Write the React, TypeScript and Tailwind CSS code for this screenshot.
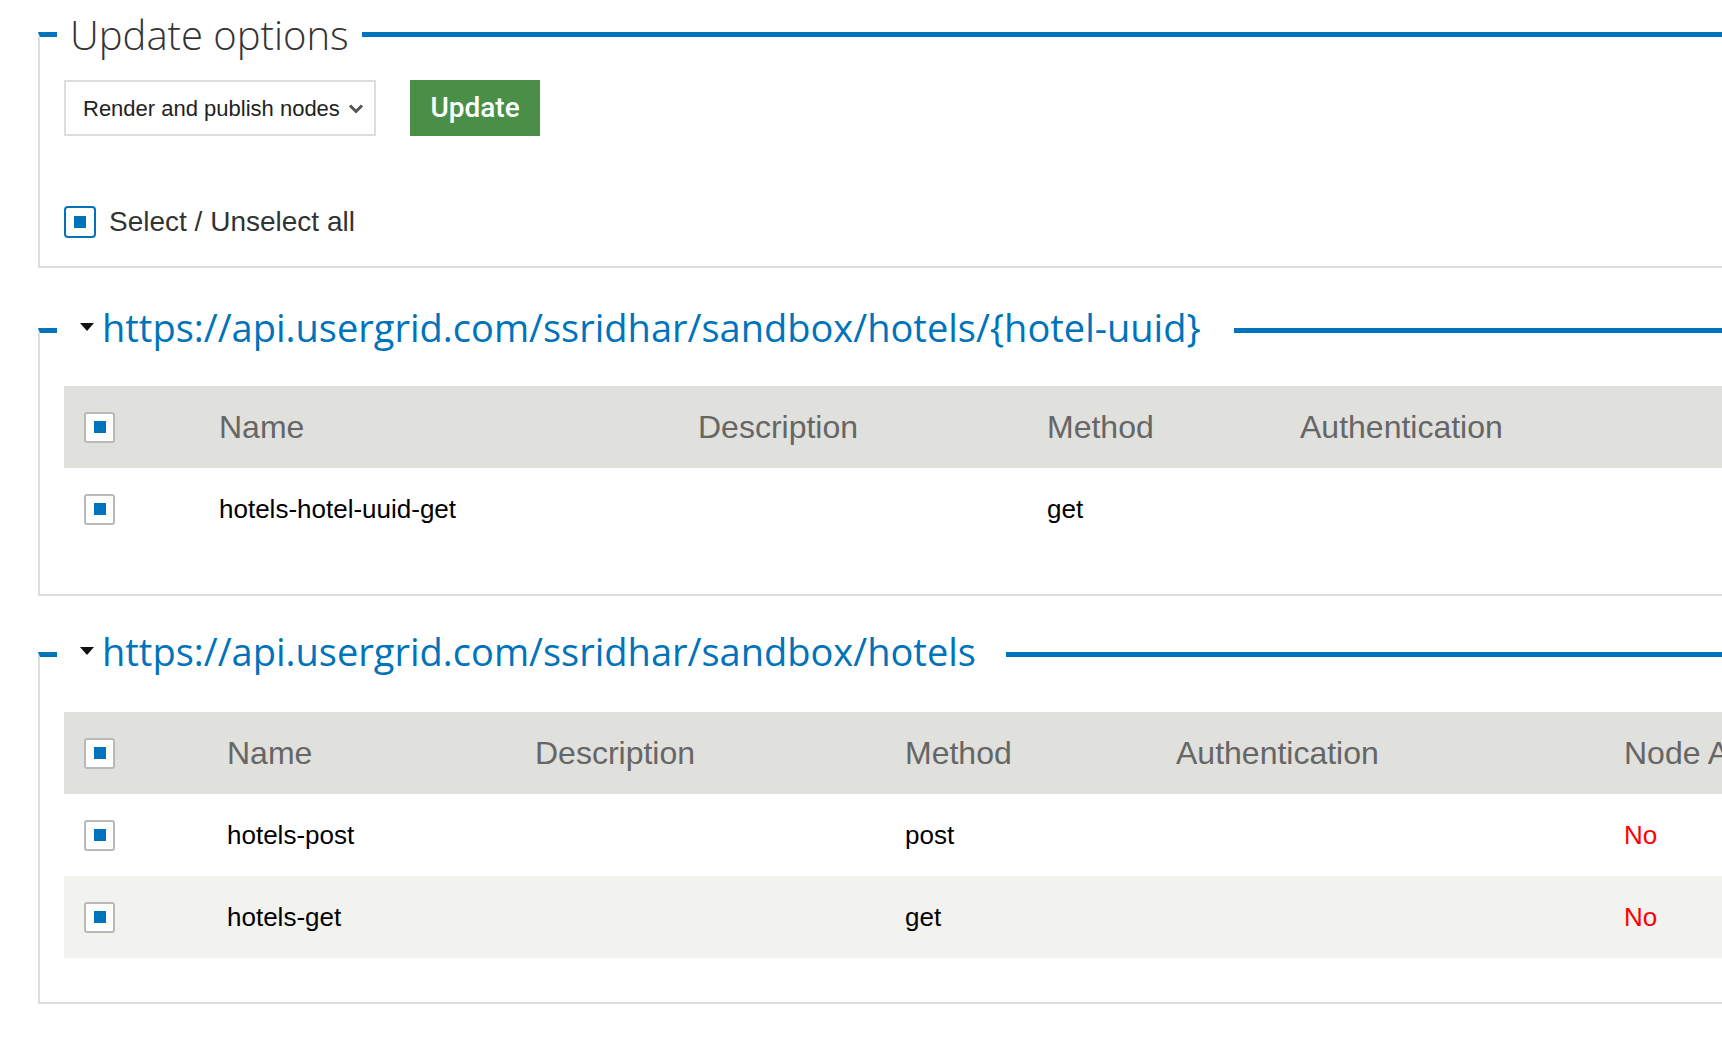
import React from 'react'

const Check = ({ blue = false }: { blue?: boolean }) => (
  <div
    className={
      blue
        ? 'flex h-[32px] w-[32px] shrink-0 items-center justify-center rounded-[4px] border-2 border-[#0073bb] bg-white'
        : 'flex h-[31px] w-[31px] shrink-0 items-center justify-center rounded-[3px] border-2 border-[#b9b9b9] bg-white'
    }
  >
    <div className="h-[12px] w-[12px] bg-[#0073bb]" />
  </div>
)

const Caret = () => (
  <svg width="14" height="8" viewBox="0 0 14 8" className="shrink-0">
    <path d="M0 0 L14 0 L7 8 Z" fill="#111" />
  </svg>
)

interface Row {
  name: string
  method: string
  node?: string
}

const resources: { url: string; cols: string; headers: string[]; rows: Row[]; linePad: string; tableTop: string }[] = [
  {
    url: 'https://api.usergrid.com/ssridhar/sandbox/hotels/{hotel-uuid}',
    cols: 'grid-cols-[155px_479px_349px_253px_1fr]',
    headers: ['Name', 'Description', 'Method', 'Authentication'],
    rows: [{ name: 'hotels-hotel-uuid-get', method: 'get' }],
    linePad: 'pr-[33px]',
    tableTop: 'mt-[39px]',
  },
  {
    url: 'https://api.usergrid.com/ssridhar/sandbox/hotels',
    cols: 'grid-cols-[163px_308px_370px_271px_448px_1fr]',
    headers: ['Name', 'Description', 'Method', 'Authentication', 'Node Active'],
    rows: [
      { name: 'hotels-post', method: 'post', node: 'No' },
      { name: 'hotels-get', method: 'get', node: 'No' },
    ],
    linePad: 'pr-[30px]',
    tableTop: 'mt-[41px]',
  },
]

export default function App() {
  return (
    <div className="h-[1044px] w-[1722px] overflow-hidden bg-white pt-[32px] font-['Liberation_Sans',Arial,sans-serif]">
      {/* Update options */}
      <div className="ml-[38px] w-[1800px] border-t-[5px] border-b-2 border-l-2 border-t-[#0073bb] border-b-[#ddd] border-l-[#ddd] pb-[28px]">
        <div className="-mt-[22px] ml-[17px] w-fit bg-white px-[13px] font-['Open_Sans',sans-serif] text-[40px] leading-[39px] font-light text-[#333]">
          Update options
        </div>
        <div className="mt-[26px] ml-[24px] flex items-center gap-[34px]">
          <div className="flex h-[56px] w-[312px] items-center border-2 border-[#ddd] pl-[17px] text-[22px] text-[#222]">
            <span>Render and publish nodes</span>
            <svg width="16" height="11" viewBox="0 0 16 11" className="ml-[8px]">
              <path d="M2 2.5 L8 8.5 L14 2.5" fill="none" stroke="#555" strokeWidth="3" />
            </svg>
          </div>
          <button className="flex h-[56px] w-[130px] items-center justify-center bg-[#4a8f47] font-['Roboto',sans-serif] text-[28px] font-medium text-white">
            Update
          </button>
        </div>
        <div className="mt-[70px] ml-[24px] flex items-center gap-[13px]">
          <Check blue />
          <span className="text-[28px] leading-[32px] text-[#333]">Select / Unselect all</span>
        </div>
      </div>

      {resources.map((res, i) => (
        <div
          key={res.url}
          className={`ml-[38px] w-[1800px] border-t-[5px] border-b-2 border-l-2 border-t-[#0073bb] border-b-[#ddd] border-l-[#ddd] pb-[44px] ${i === 0 ? 'mt-[60px]' : 'mt-[56px]'}`}
        >
          <div className={`-mt-[26px] ml-[17px] flex h-[40px] w-fit items-center bg-white pl-[23px] ${res.linePad}`}>
            <Caret />
            <span className="ml-[8px] font-['Open_Sans',sans-serif] text-[38px] leading-[40px] text-[#0073bb]">{res.url}</span>
          </div>
          <div className={`${res.tableTop} ml-[24px] w-[1700px]`}>
            <div className={`grid h-[82px] items-center bg-[#e0e0dc] text-[32px] text-[#666] ${res.cols}`}>
              <div className="pl-[20px]">
                <Check />
              </div>
              {res.headers.map((h) => (
                <div key={h} className="whitespace-nowrap">
                  {h}
                </div>
              ))}
            </div>
            {res.rows.map((r, j) => (
              <div
                key={r.name}
                className={`grid h-[82px] items-center text-[26px] text-black ${res.cols} ${j % 2 === 1 ? 'bg-[#f2f2ee]' : 'bg-white'}`}
              >
                <div className="pl-[20px]">
                  <Check />
                </div>
                <div>{r.name}</div>
                <div />
                <div>{r.method}</div>
                <div />
                {r.node && <div className="text-[#ff0000]">{r.node}</div>}
              </div>
            ))}
          </div>
        </div>
      ))}
    </div>
  )
}
